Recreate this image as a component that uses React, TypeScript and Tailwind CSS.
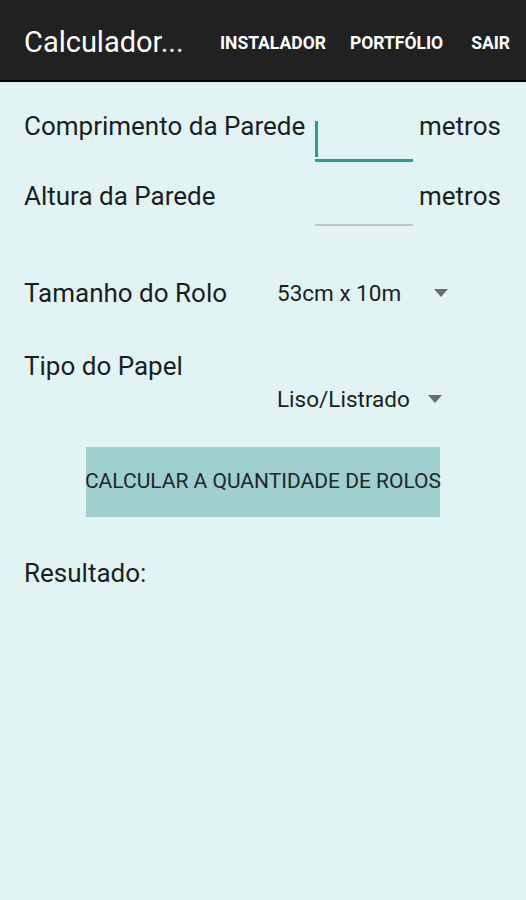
import React from "react";

function Caret() {
  return (
    <svg width="14" height="8" viewBox="0 0 14 8" className="shrink-0">
      <polygon points="0,0 14,0 7,8" fill="#676d6d" />
    </svg>
  );
}

export default function App() {
  return (
    <div className="min-h-[900px] w-full bg-[#e2f3f3] font-['Roboto',sans-serif] text-[#1b1f1f]">
      {/* Action bar */}
      <div className="h-[82px] bg-[#212121] border-b-2 border-black flex items-center pl-6 pr-4 pt-[6px]">
        <span className="text-[29px] text-white whitespace-nowrap">Calculador...</span>
        <div className="ml-auto flex items-center gap-6 text-[17.5px] font-bold text-white whitespace-nowrap">
          <span>INSTALADOR</span>
          <span>PORTFÓLIO</span>
          <span className="ml-1">SAIR</span>
        </div>
      </div>

      {/* Comprimento */}
      <div className="flex pl-6 pt-[29px]">
        <span className="w-[291px] text-[26px] leading-[30px] whitespace-nowrap">Comprimento da Parede</span>
        <div className="w-[98px] h-[51px] border-b-[3px] border-[#27a090]">
          <div className="mt-[10px] w-[3px] h-[36px] bg-[#27a090]" />
        </div>
        <span className="ml-[6px] text-[26px] leading-[30px]">metros</span>
      </div>

      {/* Altura */}
      <div className="flex pl-6 mt-[19px]">
        <span className="w-[291px] text-[26px] leading-[30px] whitespace-nowrap">Altura da Parede</span>
        <div className="w-[98px] h-[45px] border-b-2 border-[#bac6c6]" />
        <span className="ml-[6px] text-[26px] leading-[30px]">metros</span>
      </div>

      {/* Tamanho do Rolo */}
      <div className="flex items-center pl-6 mt-[52px]">
        <span className="w-[253px] text-[26px] leading-[30px] whitespace-nowrap">Tamanho do Rolo</span>
        <span className="w-[157px] text-[22.5px] leading-[30px] whitespace-nowrap">53cm x 10m</span>
        <Caret />
      </div>

      {/* Tipo do Papel */}
      <div className="pl-6 mt-[43px] text-[26px] leading-[30px]">Tipo do Papel</div>
      <div className="flex items-center pl-[277px] mt-[3px]">
        <span className="w-[151px] text-[22.5px] leading-[30px] whitespace-nowrap">Liso/Listrado</span>
        <Caret />
      </div>

      {/* Button */}
      <div className="pl-[86px] mt-[33px]">
        <button className="w-[354px] h-[70px] bg-[#9fcfcf] flex items-center justify-center text-[21px] text-[#1f2727] whitespace-nowrap">
          CALCULAR A QUANTIDADE DE ROLOS
        </button>
      </div>

      {/* Resultado */}
      <div className="pl-6 mt-[41px] text-[26px] leading-[30px]">Resultado:</div>
    </div>
  );
}
